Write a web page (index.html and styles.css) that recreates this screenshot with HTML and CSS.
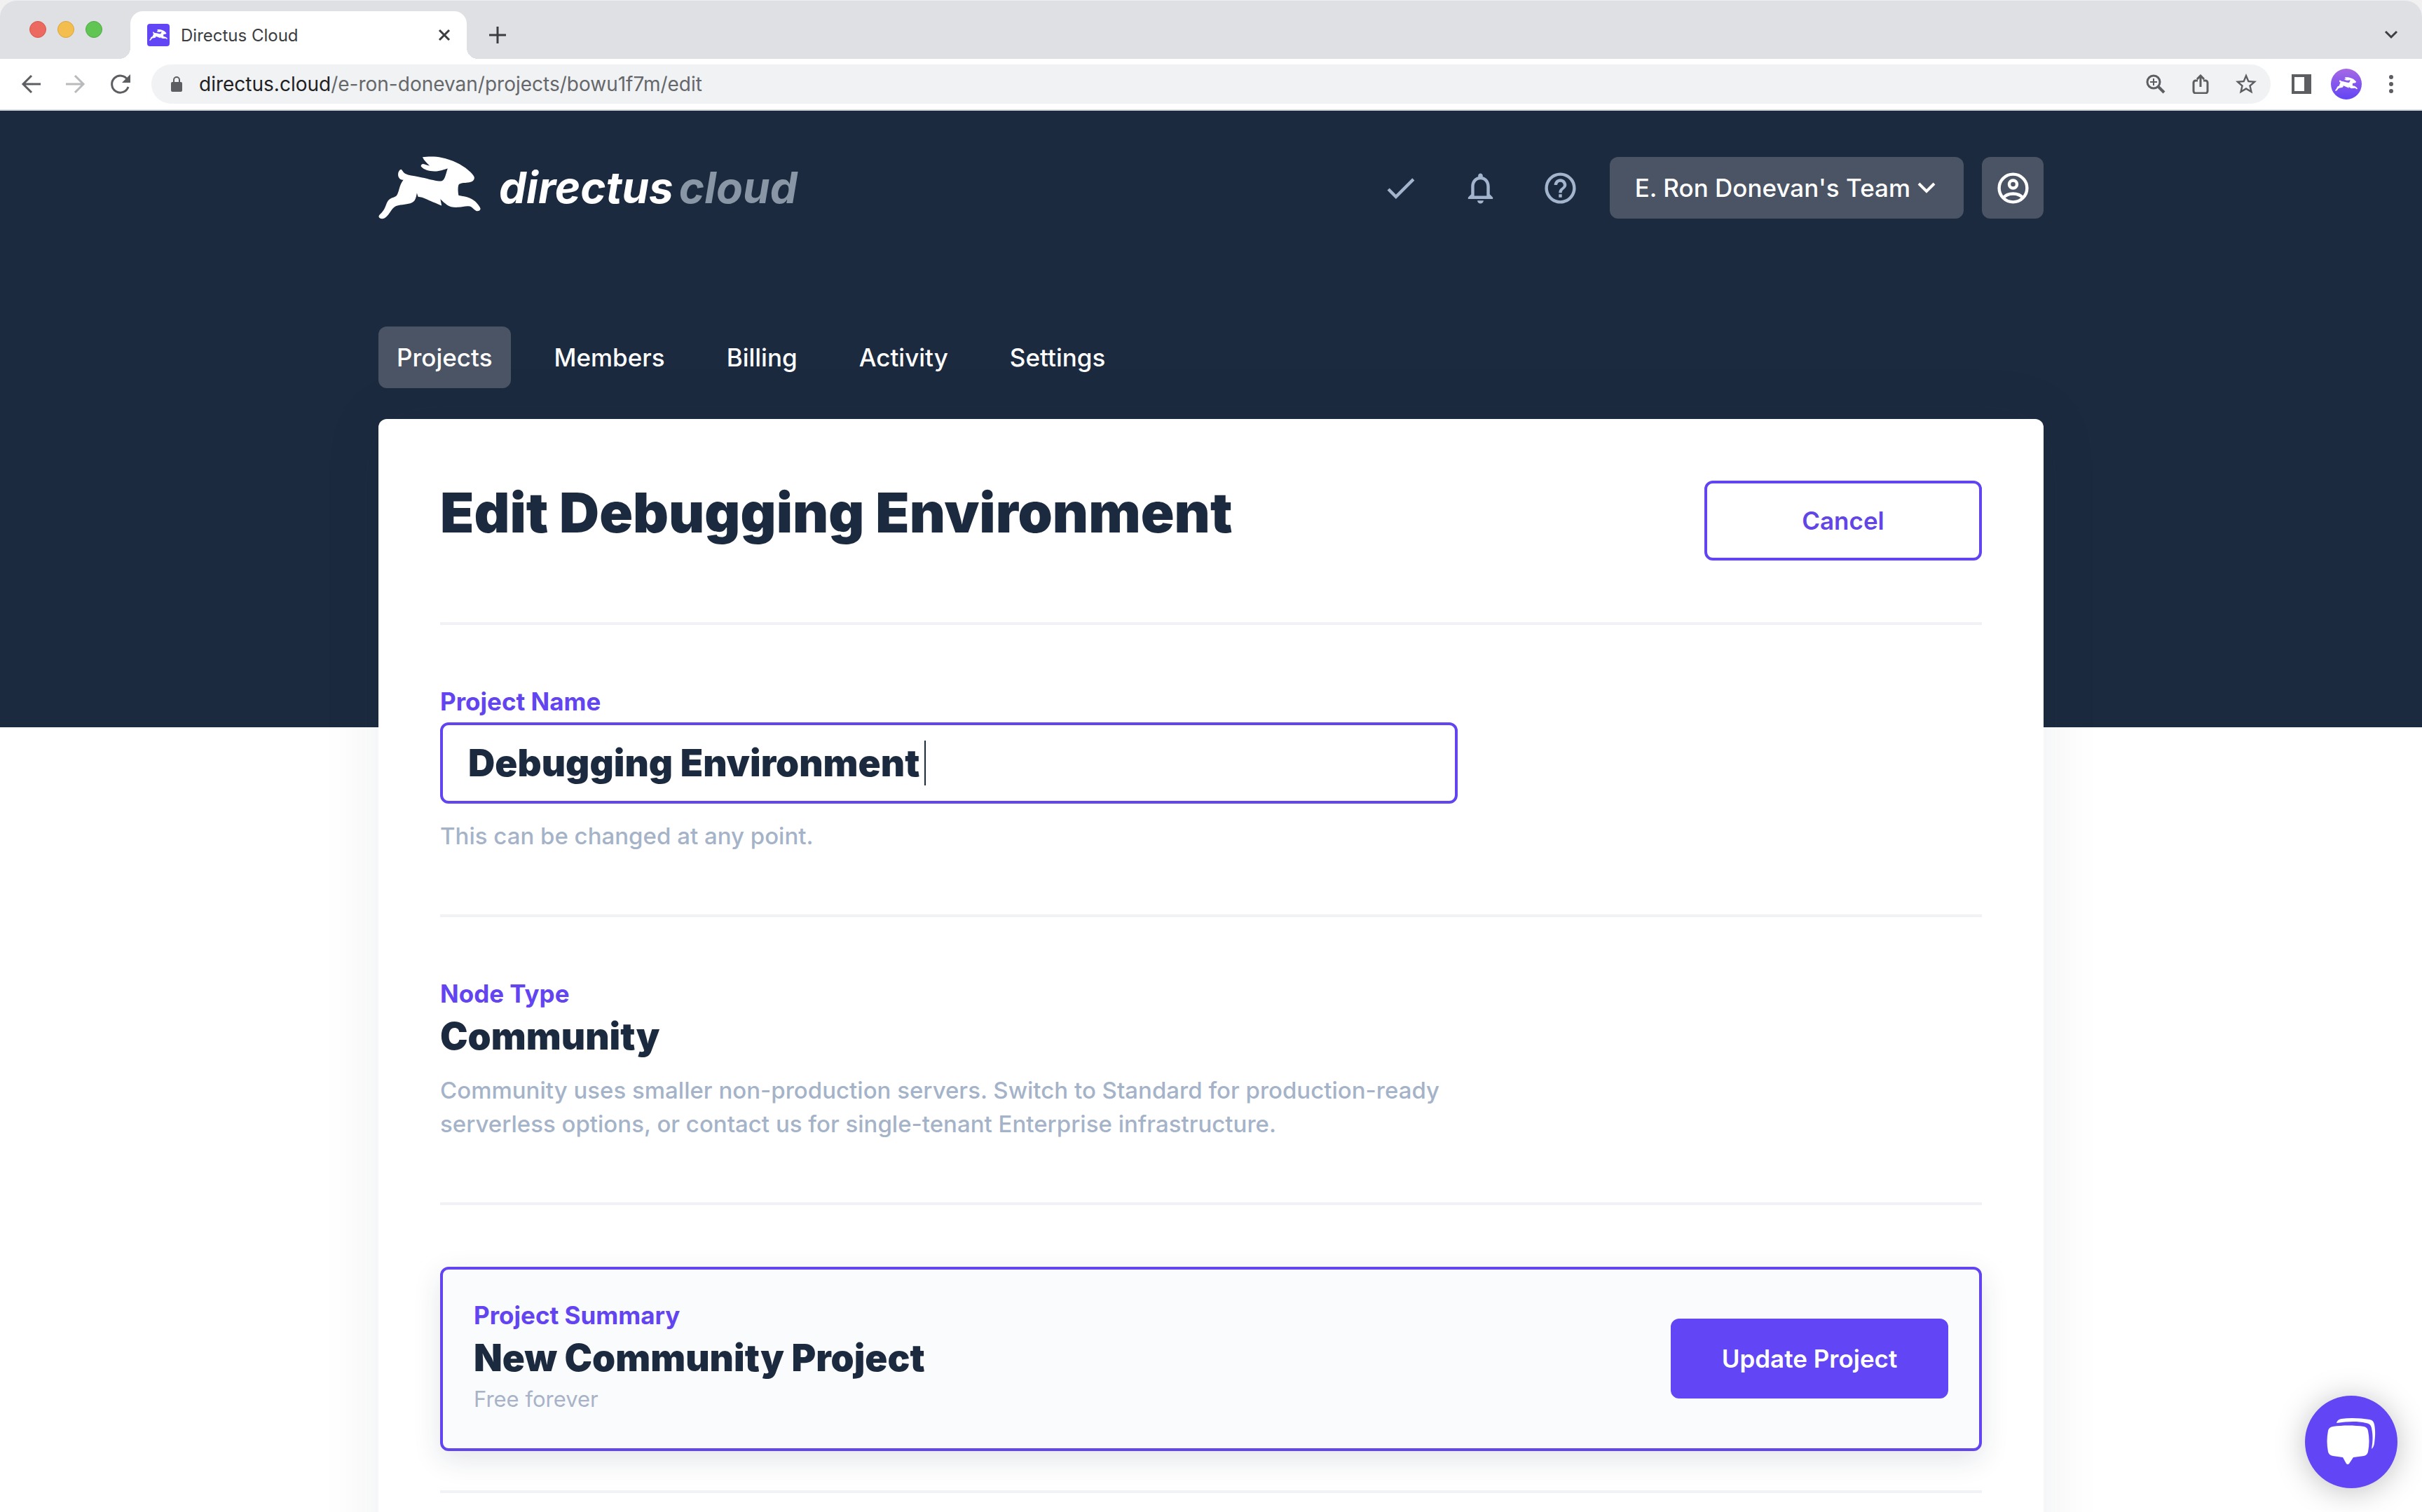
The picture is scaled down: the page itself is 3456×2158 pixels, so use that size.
FILE: index.html
```html
<!DOCTYPE html>
<html lang="en">
<head>
<meta charset="utf-8">
<meta name="viewport" content="width=device-width, initial-scale=1">
<title>Directus Cloud</title>
<link rel="stylesheet" href="styles.css">
</head>
<body>
<svg class="defs" aria-hidden="true">
  <symbol id="rabbit" viewBox="32 40 434 268">
    <path d="M219 44C240 41 275 40 300 46C345 55 385 75 412 98C425 109 438 122 439 130C440 142 430 150 412 152C395 154 378 153 372 162C368 175 370 195 372 206C385 210 405 210 420 218C445 228 460 250 465 262C466 270 455 275 447 272C435 266 432 257 420 253C400 250 390 257 370 257C350 258 335 255 322 246C308 236 302 230 295 222C296 232 299 240 300 250C290 246 280 240 262 234C240 226 225 214 200 212L195 196C193 205 192 218 185 228C172 243 150 243 125 247C105 250 98 255 88 268C78 282 70 298 55 304C45 308 32 303 33 295C36 287 48 280 56 265C62 255 65 240 72 230C82 216 100 215 108 208C120 195 118 165 138 140C130 143 118 135 116 125C113 112 118 100 127 96C134 98 135 108 145 114C160 122 180 123 200 127C240 134 270 146 298 146C315 143 317 115 326 92C310 96 295 104 270 104C245 104 225 97 213 84C211 79 214 74 222 73C230 75 238 79 249 80C238 70 225 58 219 44Z"/>
  </symbol>
</svg>
<div class="browser">
  <div class="tabstrip">
    <div class="lights"><span class="light red"></span><span class="light yellow"></span><span class="light green"></span></div>
    <div class="tab">
      <span class="favicon"><svg width="26" height="16"><use href="#rabbit"/></svg></span>
      <span class="tab-title">Directus Cloud</span>
      <button class="bare" aria-label="Close tab"><svg width="20" height="20" viewBox="0 0 20 20" fill="none" stroke="currentColor" stroke-width="3"><path d="M3 3l14 14M17 3L3 17"/></svg></button>
    </div>
    <button class="bare new-tab" aria-label="New tab"><svg width="24" height="24" viewBox="0 0 24 24" fill="none" stroke="currentColor" stroke-width="3"><path d="M12 0v24M0 12h24"/></svg></button>
    <button class="bare tab-list" aria-label="Search tabs"><svg width="20" height="14" viewBox="0 0 20 14" fill="none" stroke="currentColor" stroke-width="3"><path d="M2 2l8 8 8-8"/></svg></button>
  </div>
  <div class="toolbar">
    <button class="bare" aria-label="Back"><svg width="28" height="28" viewBox="0 0 28 28" fill="none" stroke="currentColor" stroke-width="3"><path d="M28 14H3M15 2L3 14l12 12"/></svg></button>
    <button class="bare faded" aria-label="Forward"><svg width="28" height="28" viewBox="0 0 28 28" fill="none" stroke="currentColor" stroke-width="3"><path d="M0 14h25M13 2l12 12-12 12"/></svg></button>
    <button class="bare" aria-label="Reload"><svg width="28" height="28" viewBox="0 0 28 28"><path d="M24 8A12 12 0 1 0 25 18" fill="none" stroke="currentColor" stroke-width="3"/><path d="M28 0v12H16z" fill="currentColor"/></svg></button>
    <div class="omnibox">
      <svg width="16" height="22" viewBox="0 0 16 22"><rect y="8" width="16" height="14" rx="2" fill="currentColor"/><path d="M4 9V5a4 4 0 0 1 8 0v4" fill="none" stroke="currentColor" stroke-width="2"/></svg>
      <span class="url"><span class="host">directus.cloud</span>/e-ron-donevan/projects/bowu1f7m/edit</span>
      <button class="bare" aria-label="Zoom"><svg width="28" height="28" viewBox="0 0 28 28" fill="none" stroke="currentColor"><circle cx="11" cy="11" r="9" stroke-width="3"/><path d="M18 18l8 8" stroke-width="4"/><path d="M11 6v10M6 11h10" stroke-width="2"/></svg></button>
      <button class="bare" aria-label="Share"><svg width="28" height="28" viewBox="0 0 28 28" fill="none" stroke="currentColor" stroke-width="3"><path d="M10 9H7a3 3 0 0 0-3 3v12a3 3 0 0 0 3 3h14a3 3 0 0 0 3-3V12a3 3 0 0 0-3-3h-3M14 18V2M9 7l5-5 5 5"/></svg></button>
      <button class="bare" aria-label="Bookmark"><svg width="30" height="30" viewBox="2 2 20 20" fill="currentColor"><path d="M22 9.24l-7.19-.62L12 2 9.190 8.630 2 9.240l5.460 4.730L5.820 21 12 17.270 18.180 21l-1.630-7.030L22 9.240zM12 15.400l-3.760 2.270 1-4.280-3.320-2.880 4.380-.38L12 6.100l1.710 4.040 4.380.380-3.320 2.880 1 4.280L12 15.400z"/></svg></button>
    </div>
    <button class="bare" aria-label="Side panel"><svg width="28" height="28" viewBox="0 0 28 28"><path d="M0 0h28v28H0zM4 4v20h14V4z" fill="currentColor" fill-rule="evenodd"/></svg></button>
    <button class="bare profile" aria-label="Profile"><svg width="32" height="20"><use href="#rabbit"/></svg></button>
    <button class="bare" aria-label="Menu"><svg width="8" height="28" viewBox="0 0 8 28" fill="currentColor"><circle cx="4" cy="4" r="3"/><circle cx="4" cy="14" r="3"/><circle cx="4" cy="24" r="3"/></svg></button>
  </div>
  <div class="page">
    <div class="container">
      <header class="header">
        <a class="logo" href="#"><svg width="146" height="90"><use href="#rabbit"/></svg><span class="wordmark"><span>directus</span> <span class="cloud">cloud</span></span></a>
        <div class="actions">
          <button class="bare icon" aria-label="Status"><svg viewBox="0 0 24 24"><path d="M9 16.170L4.830 12l-1.420 1.410L9 19 21 7l-1.410-1.410z"/></svg></button>
          <button class="bare icon" aria-label="Notifications"><svg viewBox="0 0 24 24"><path d="M12 22c1.100 0 2-.9 2-2h-4c0 1.100.9 2 2 2zm6-6v-5c0-3.070-1.630-5.640-4.500-6.320V4c0-.83-.67-1.500-1.500-1.500s-1.500.67-1.500 1.500v.68C7.640 5.360 6 7.920 6 11v5l-2 2v1h16v-1l-2-2zm-2 1H8v-6c0-2.480 1.510-4.500 4-4.500s4 2.020 4 4.500v6z"/></svg></button>
          <button class="bare icon" aria-label="Help"><svg viewBox="0 0 24 24"><path d="M11 18h2v-2h-2v2zm1-16C6.480 2 2 6.480 2 12s4.480 10 10 10 10-4.480 10-10S17.520 2 12 2zm0 18c-4.410 0-8-3.590-8-8s3.590-8 8-8 8 3.590 8 8-3.590 8-8 8zm0-14c-2.210 0-4 1.790-4 4h2c0-1.100.9-2 2-2s2 .9 2 2c0 2-3 1.750-3 5h2c0-2.250 3-2.500 3-5 0-2.210-1.790-4-4-4z"/></svg></button>
        </div>
        <button class="bare chip team">E. Ron Donevan's Team<svg width="26" height="18" viewBox="0 0 26 18" fill="none" stroke="currentColor" stroke-width="4"><path d="M2 3l11 11L24 3"/></svg></button>
        <button class="bare chip account" aria-label="Account"><svg viewBox="0 0 24 24"><circle cx="12" cy="12" r="9" fill="none" stroke="currentColor" stroke-width="2"/><circle cx="12" cy="9.500" r="2.500" fill="none" stroke="currentColor" stroke-width="2"/><path d="M5.500 18.500C7 16.500 9.500 15.600 12 15.600s5 .9 6.500 2.900" fill="none" stroke="currentColor" stroke-width="2"/></svg></button>
      </header>
      <nav class="tabs">
        <a class="chip" href="#">Projects</a><a href="#">Members</a><a href="#">Billing</a><a href="#">Activity</a><a href="#">Settings</a>
      </nav>
      <main class="card">
        <section class="heading">
          <h1>Edit Debugging Environment</h1>
          <button class="btn outline">Cancel</button>
        </section>
        <section class="field">
          <label class="label" for="name">Project Name</label>
          <div class="input-wrap"><input id="name" type="text" value="Debugging Environment"><span class="caret"></span></div>
          <p class="note">This can be changed at any point.</p>
        </section>
        <section class="field">
          <div class="label">Node Type</div>
          <h2>Community</h2>
          <p class="note">Community uses smaller non-production servers. Switch to Standard for production-ready serverless options, or contact us for single-tenant Enterprise infrastructure.</p>
        </section>
        <section class="summary-section">
          <div class="summary">
            <div>
              <div class="label">Project Summary</div>
              <h2>New Community Project</h2>
              <p class="price">Free forever</p>
            </div>
            <button class="btn solid">Update Project</button>
          </div>
        </section>
      </main>
    </div>
  </div>
</div>
<button class="bare chat" aria-label="Open chat"><svg width="132" height="132" viewBox="0 0 132 132" fill="currentColor"><path d="M40 44C54 42 70 42 84 44Q89 45 90 50C92 60 92 70 90 80Q89 85 84 86L69 88L63 97Q61 99 59 97L54 88L40 86Q34 85 33 80C31 70 31 60 33 50Q34 45 40 44Z"/><path d="M45 39Q46 34 52 33C65 31 80 32 92 34Q98 35 99 41C101 52 100 60 99 68Q98 74 95 76C97 64 97 56 95 46Q94 40 87 39C74 36 60 37 45 39Z"/></svg></button>
</body>
</html>
```
FILE: styles.css
```css
* { box-sizing: border-box; }
html, body { margin: 0; height: 100%; overflow: hidden; }
body { font-family: "Inter", sans-serif; font-size: 35px; background: #f1f1f1; color: #1c2a3f; }
h1, h2, p { margin: 0; }
a { color: inherit; text-decoration: none; }
svg { display: block; flex: none; }
.defs { position: absolute; width: 0; height: 0; }
.bare { display: flex; align-items: center; justify-content: center; padding: 0; border: 0; background: none; color: inherit; font: inherit; }

.browser { height: 100%; display: flex; flex-direction: column; }
.tabstrip { flex: none; height: 84px; display: flex; align-items: flex-end; background: #dfe0e4; border-top: 1px solid #eeeff1; border-radius: 24px 24px 0 0; color: #3c3d40; }
.lights { display: flex; gap: 16px; height: 84px; width: 186px; padding: 30px 0 0 42px; }
.light { width: 24px; height: 24px; border-radius: 50%; }
.red { background: #ec695f; border: 1px solid #d7564e; }
.yellow { background: #f4be4f; border: 1px solid #d9a440; }
.green { background: #61c554; border: 1px solid #50a944; }
.tab { position: relative; width: 480px; height: 68px; display: flex; align-items: center; gap: 16px; padding: 0 22px 0 24px; background: #fff; border-radius: 18px 18px 0 0; }
.tab::before, .tab::after { content: ""; position: absolute; bottom: 0; width: 16px; height: 16px; }
.tab::before { right: 100%; background: radial-gradient(circle at 0 0, transparent 16px, #fff 16px); }
.tab::after { left: 100%; background: radial-gradient(circle at 100% 0, transparent 16px, #fff 16px); }
.favicon { width: 32px; height: 32px; display: flex; align-items: center; justify-content: center; background: #6245f5; border-radius: 4px; }
.favicon svg, .profile svg { fill: #fff; }
.tab-title { flex: 1; font-size: 24px; }
.new-tab { height: 68px; margin-left: 32px; }
.tab-list { height: 68px; margin: 0 34px 0 auto; }

.toolbar { flex: none; height: 74px; display: flex; align-items: center; gap: 36px; padding: 0 40px 0 30px; background: #fff; border-bottom: 2px solid #d8dcdf; color: #5d5e61; }
.faded { color: #b9babc; }
.omnibox { flex: 1; height: 56px; display: flex; align-items: center; gap: 36px; margin: 0 -6px 0 -6px; padding: 0 20px 0 28px; background: #f0f2f4; border-radius: 28px; }
.url { flex: 1; margin-left: -12px; font-size: 28px; color: #65676a; }
.host { color: #1f2023; }
.profile { width: 44px; height: 44px; margin: 0 2px 0 -8px; border-radius: 50%; background: linear-gradient(#a568e4, #6245f5); }

.page { flex: 1; min-height: 0; overflow: hidden; background: linear-gradient(#1c2a3f 880px, #fff 880px); }
.container { width: 2376px; max-width: 100%; margin: 0 auto; padding-top: 66px; }
.header { display: flex; align-items: center; height: 88px; gap: 26px; color: #fff; }
.logo { display: flex; align-items: center; gap: 26px; margin-right: auto; fill: #fff; }
.wordmark { display: flex; gap: 8px; font-weight: 700; font-style: italic; font-size: 62px; line-height: 88px; }
.cloud { color: #8996a5; }
.actions { display: flex; gap: 61px; margin-right: 18px; color: #a2b5cd; }
.icon svg, .account svg { width: 53px; height: 53px; fill: currentColor; }
.chip { background: #4a5464; border-radius: 12px; }
.team { height: 88px; padding: 0 40px 0 36px; gap: 10px; font-weight: 500; }
.account { width: 88px; height: 88px; }
.tabs { display: flex; gap: 36px; margin: 154px 0 44px; color: #fff; font-weight: 500; line-height: 88px; }
.tabs a { padding: 0 26px; }

.card { min-height: 1700px; padding: 0 88px; background: #fff; border-radius: 12px; box-shadow: 0 0 88px rgba(28, 42, 63, .08); }
.card > section { padding: 88px 0; border-bottom: 4px solid #f0f2f5; }
.heading { display: flex; justify-content: space-between; align-items: flex-start; }
h1 { font-size: 79px; line-height: 90px; font-weight: 900; }
h2 { font-size: 53px; line-height: 62px; font-weight: 900; }
.btn { width: 396px; height: 114px; border: 4px solid #6245f0; border-radius: 12px; font: inherit; font-weight: 600; }
.outline { background: #fff; color: #6245e6; }
.solid { background: #6245f5; border-color: #6245f5; color: #fff; }
.label { display: block; margin-bottom: 9px; line-height: 42px; font-weight: 700; color: #6245f0; }
.input-wrap { position: relative; width: 66%; }
input { display: block; width: 100%; height: 116px; padding: 0 36px; border: 4px solid #6245f0; border-radius: 12px; background: #fff; font: inherit; font-size: 53px; font-weight: 900; color: inherit; outline: 0; }
.caret { position: absolute; left: 691px; top: 26px; width: 2px; height: 64px; background: #1c2a3f; }
.note { width: 1460px; margin-top: 22px; font-size: 33px; line-height: 48px; font-weight: 500; color: #a5b3c9; }
.card > .summary-section { padding-bottom: 56px; }
.summary { display: flex; justify-content: space-between; align-items: center; padding: 44px 44px 46px; background: #fafbfd; border: 4px solid #6245f0; border-radius: 12px; box-shadow: 0 12px 40px rgba(28, 42, 63, .12); }
.price { margin-top: 4px; font-size: 31px; line-height: 48px; color: #a9b3c8; }
.chat { position: fixed; right: 35px; bottom: 34px; width: 132px; height: 132px; border-radius: 50%; background: #6245f5; color: #fff; box-shadow: 0 4px 44px rgba(0, 0, 0, .25); }
```
